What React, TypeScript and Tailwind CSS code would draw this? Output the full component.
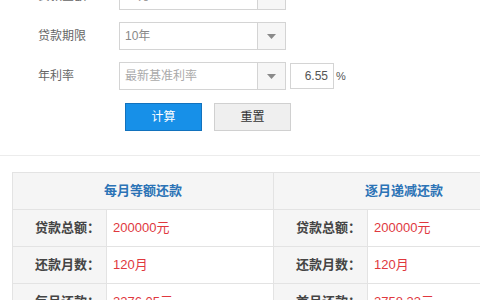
import React from "react"

const Caret = () => (
  <svg width="9" height="5" viewBox="0 0 9 5">
    <path d="M0 0 L9 0 L4.5 5 Z" fill="#8a8a8a" />
  </svg>
)

const Select = ({ text, placeholder }: { text?: string; placeholder?: string }) => (
  <div className="flex w-[167px] h-[28px] border border-[#d4d4d4] bg-white">
    <div className={`flex-1 flex items-center pl-[5px] text-[12px] ${text ? "text-[#888]" : "text-[#aaa]"}`}>
      {text ?? placeholder}
    </div>
    <div className="w-[28px] flex items-center justify-center border-l border-[#d4d4d4] bg-[#f6f6f6]">
      <Caret />
    </div>
  </div>
)

const Row = ({ label, children }: { label: string; children: React.ReactNode }) => (
  <div className="flex items-center h-[28px]">
    <div className="w-[119px] pl-[38px] text-[12px] text-[#666]">{label}</div>
    {children}
  </div>
)

const tables = [
  {
    title: "每月等额还款",
    rows: [
      ["贷款总额：", "200000元"],
      ["还款月数：", "120月"],
      ["每月还款：", "2276.05元"],
    ],
  },
  {
    title: "逐月递减还款",
    rows: [
      ["贷款总额：", "200000元"],
      ["还款月数：", "120月"],
      ["首月还款：", "2758.33元"],
    ],
  },
]

export default function App() {
  return (
    <div
      className="w-[480px] h-[300px] overflow-hidden bg-white"
      style={{ fontFamily: '"Liberation Sans", "Noto Sans CJK SC", sans-serif' }}
    >
      <div className="-mt-[18px] flex flex-col gap-[12px]">
        <Row label="贷款金额">
          <Select text="20万" />
        </Row>
        <Row label="贷款期限">
          <Select text="10年" />
        </Row>
        <Row label="年利率">
          <Select placeholder="最新基准利率" />
          <div className="ml-[4px] w-[44px] h-[26px] border border-[#d4d4d4] flex items-center justify-end pr-[5px] text-[12px] text-[#555]">
            6.55
          </div>
          <span className="ml-[2px] text-[11px] text-[#555]">%</span>
        </Row>
      </div>
      <div className="flex gap-[12px] pl-[125px] mt-[13px]">
        <button className="w-[77px] h-[28px] bg-[#1790e8] border border-[#1272bd] text-white text-[12px]">
          计算
        </button>
        <button className="w-[77px] h-[28px] bg-[#efefef] border border-[#d0d0d0] text-[#333] text-[12px]">
          重置
        </button>
      </div>
      <div className="mt-[24px] border-t border-[#ececec]" />
      <div className="mt-[16px] ml-[12px] flex w-[522px] border-t border-l border-[#e3e3e3]">
        {tables.map((t) => (
          <div key={t.title} className="w-[261px] shrink-0 border-r border-[#e3e3e3]">
            <div className="h-[37px] flex items-center justify-center bg-[#f5f5f5] border-b border-[#e3e3e3] text-[13px] font-bold text-[#2b73b6]">
              {t.title}
            </div>
            {t.rows.map(([k, v]) => (
              <div key={k} className="flex h-[37px] border-b border-[#e3e3e3]">
                <div className="w-[94px] shrink-0 flex items-center justify-end pr-[6px] bg-[#f5f5f5] border-r border-[#e3e3e3] text-[13px] font-bold text-[#444]">
                  {k}
                </div>
                <div className="flex-1 flex items-center pl-[6px] text-[13px] text-[#e0383e]">{v}</div>
              </div>
            ))}
          </div>
        ))}
      </div>
    </div>
  )
}
